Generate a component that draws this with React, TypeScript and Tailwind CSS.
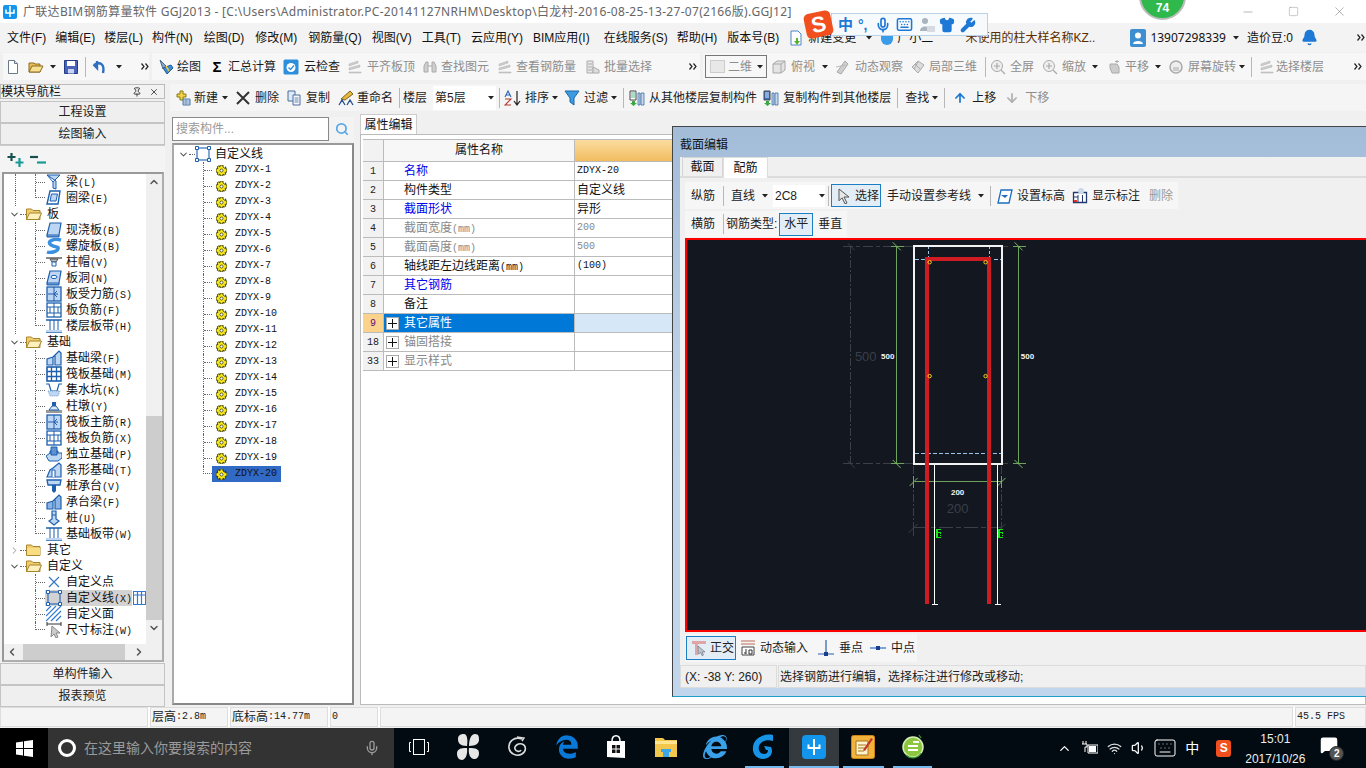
import React from "react";
import { FaEdgeLegacy, FaInternetExplorer } from "react-icons/fa";
import { Mic, ChevronDown, ChevronRight, ChevronUp, ChevronLeft, Search, Wifi, Volume1, Keyboard, X, Minus, Square, Pin, Shirt, Wrench, Bell, ArrowUp, ArrowDown, MessageSquare } from "lucide-react";

const SANS = "font-['Liberation_Sans','Noto_Sans_CJK_SC',sans-serif]";
const MONO = "font-['Liberation_Mono','Noto_Sans_CJK_SC',monospace]";
const NOTO = "font-['Noto_Sans','Noto_Sans_CJK_SC',sans-serif]";

const Mix = ({ text }: { text: string }) => (
  <>
    {text.split(/([\x00-\x7f]+)/).filter(Boolean).map((p, i) =>
      /^[\x00-\x7f]+$/.test(p) ? (
        <span key={i} className={`${MONO} text-[10px] whitespace-pre`}>{p}</span>
      ) : (
        <span key={i} className={`${SANS} text-[12px]`}>{p}</span>
      )
    )}
  </>
);

const Svg = ({ children, w = 16, h = 16, cls = "" }: { children: React.ReactNode; w?: number; h?: number; cls?: string }) => (
  <svg width={w} height={h} viewBox={`0 0 ${w} ${h}`} className={`shrink-0 ${cls}`}>{children}</svg>
);

const Caret = ({ cls = "" }: { cls?: string }) => (
  <svg width="6" height="4" viewBox="0 0 6 4" className={`shrink-0 ${cls}`}><path d="M0 0h6L3 3.5z" fill="#222" /></svg>
);
const Chevrons = ({ cls = "" }: { cls?: string }) => (
  <svg width="8" height="7" viewBox="0 0 8 7" className={`shrink-0 ${cls}`}><path d="M0.5 0.5 3 3.5 0.5 6.5M4.5 0.5 7 3.5 4.5 6.5" fill="none" stroke="#222" strokeWidth="1.2" /></svg>
);
const Sep = ({ cls = "" }: { cls?: string }) => <div className={`w-px h-[20px] bg-[#b8b8b8] shrink-0 ${cls}`} />;

const Item = ({ cls = "", gap = "gap-[3px]", icon, label, gray }: { cls?: string; gap?: string; icon?: React.ReactNode; label: string; gray?: boolean }) => (
  <div className={`flex items-center shrink-0 text-[12px] whitespace-nowrap ${gap} ${cls} ${gray ? "text-[#8e8e8e]" : "text-[#1c1c1c]"}`}>
    {icon}
    <span>{label}</span>
  </div>
);

/* ---- toolbar icons ---- */
const GrayBox = () => <Svg><path d="M2 5 6 2h8v9l-4 3H2z" fill="#e4e4e4" stroke="#a8a8a8" /><path d="M2 5h8v9M10 5l4-3" fill="none" stroke="#a8a8a8" /></Svg>;
const GrayBlob = () => <Svg><path d="M3 13 11 2l3 3-7 10z" fill="#cfcfcf" stroke="#a8a8a8" /><path d="M2 8 12 6" stroke="#bbb" fill="none" /></Svg>;
const GrayCube = () => <Svg><path d="M8 2l6 4-6 8-6-6z" fill="#ddd" stroke="#aaa" /><path d="M5 5l6 6M8 3l-4 7" stroke="#aaa" fill="none" /></Svg>;
const GrayZoom = () => <Svg><circle cx="7" cy="7" r="5.5" fill="#efefef" stroke="#aaa" /><path d="M7 4v6M4 7h6M11 11l4 4" stroke="#aaa" strokeWidth="1.2" fill="none" /></Svg>;
const GrayHand = () => <Svg><path d="M4 9V5h7l2 3v6H6z" fill="#ccc" stroke="#aaa" /><path d="M11 1v3M9 2.5h4" stroke="#aaa" /></Svg>;
const GrayRotate = () => <Svg><circle cx="8" cy="8" r="6" fill="#eee" stroke="#aaa" strokeWidth="1.5" /><path d="M5 8h6v4H5z" fill="#ccc" /></Svg>;
const GrayBino = () => <Svg><path d="M2 13V7l2-4h2v10zM14 13V7l-2-4h-2v10z" fill="#cfcfcf" stroke="#aaa" /><path d="M6 7h4" stroke="#aaa" /></Svg>;
const GrayLayers = () => <Svg><path d="M2 5l9-3v2l-9 3zM2 9l11-3v2L2 11zM2 13h12v1H2z" fill="#ccc" stroke="#b0b0b0" strokeWidth="0.5" /></Svg>;
const GrayBatch = () => <Svg><path d="M2 2h6v12H2z" fill="#e8e8e8" stroke="#aaa" /><path d="M3 5h4M3 8h4M3 11h4M8 8l6 3v3H8z" stroke="#aaa" fill="#ddd" /></Svg>;

const FileIcon = () => <Svg w={14}><path d="M2.5 1.5h6l3 3v10h-9z" fill="#fff" stroke="#6a7a8a" /><path d="M8.5 1.5v3h3" fill="#dde" stroke="#6a7a8a" /></Svg>;
const OpenIcon = () => <Svg><path d="M1 13V4h5l1 1h5v8z" fill="#e9bd55" stroke="#8a6a20" /><path d="M1 13l3-6h11l-3 6z" fill="#f7df90" stroke="#8a6a20" /></Svg>;
const SaveIcon = () => <Svg><path d="M1.5 1.5h13v13h-13z" fill="#4a63b8" stroke="#223a88" /><path d="M4 2h8v5H4z" fill="#fff" /><path d="M5 10h6v4.5H5z" fill="#c8d4f0" /></Svg>;
const UndoIcon = () => <Svg><path d="M5 2v7L1.5 5.5M2 6c6-4 11-1 9 8" fill="none" stroke="#2d6fc0" strokeWidth="2.4" /></Svg>;
const DrawIcon = () => <Svg><path d="M2 1l6 6-3 3z" fill="#8aa9c9" stroke="#46688a" /><path d="M5 9l8-3 2 3-6 6z" fill="#3d8ad6" stroke="#1c5ca0" /><path d="M8 7l3 5" stroke="#f1c232" strokeWidth="1.5" /></Svg>;
const CloudIcon = () => <Svg><rect x="0.5" y="0.5" width="15" height="15" rx="1.5" fill="#2d8fdc" /><circle cx="8" cy="8.5" r="4.5" fill="#fff" /><path d="M5.5 8.5l2 2 3.5-4" stroke="#2d8fdc" strokeWidth="1.4" fill="none" /></Svg>;
const NewIcon = () => <Svg><path d="M5 1h3v3h3v3H8v3H5V7H2V4h3z" fill="#f0d24a" stroke="#8a7a10" /><path d="M8 9h7v6H8z" fill="#d3e2f4" stroke="#4d78a8" /><path d="M8 11h7M8 13h7M11 9v6" stroke="#4d78a8" strokeWidth="0.6" /></Svg>;
const DelIcon = () => <Svg><path d="M2 2l12 12M14 2 2 14" stroke="#333" strokeWidth="2" /></Svg>;
const CopyIcon = () => <Svg><path d="M2 1h7v10H2z" fill="#dfe9f6" stroke="#4b6e9d" /><path d="M7 5h7v10H7z" fill="#f4f7fb" stroke="#4b6e9d" /><path d="M8.5 8h4M8.5 10h4M8.5 12h4" stroke="#4b6e9d" strokeWidth="0.8" /></Svg>;
const RenameIcon = () => <Svg><path d="M3 9l9-8 3 3-8 6z" fill="#e4b63e" stroke="#7f6413" /><path d="M1 15l3-5 3 5M9 15l3-5 3 5" fill="none" stroke="#274f93" strokeWidth="1.3" /></Svg>;
const SortIcon = () => <Svg w={18}><path d="M1 7l3-6 3 6M2 5h4" fill="none" stroke="#2d62b5" strokeWidth="1.1" /><path d="M1 9h6L1 15h6" fill="none" stroke="#b03a2e" strokeWidth="1.1" /><path d="M13 1v13M10 11l3 4 3-4" fill="none" stroke="#222" strokeWidth="1.2" /></Svg>;
const FilterIcon = () => <Svg><path d="M1 1h14L10 8v7L6 12V8z" fill="#3f9ae0" stroke="#1b68a8" /></Svg>;
const CopyFloor = ({ flip }: { flip?: boolean }) => <Svg><path d="M1 1h6v9H1z" fill={flip ? "#3a76c8" : "#fff"} stroke="#444" /><path d="M2 3h4M2 5h4M2 7h4" stroke={flip ? "#fff" : "#2a7"} strokeWidth="0.8" /><path d="M3 11h3v2h2l-3.5 3L1 13h2z" fill="#3aa845" /><path d="M9 3h2v12H9zM12 3h3v12h-3z" fill="#c5d9f1" stroke="#2d5f9e" strokeWidth="0.7" /></Svg>;
const SelectArrow = () => <Svg w={14}><path d="M2 1l10 8H7l3 6-2 .8-3-6-3 3z" fill="#e8e8e8" stroke="#555" /></Svg>;
const ElevIcon = () => <Svg><path d="M4 2h11l-3 13H1z" fill="#fff" stroke="#1d6dc0" strokeWidth="1.3" /><path d="M4 7h7l-3 3z" fill="#1d6dc0" /></Svg>;
const ShowDim = () => <Svg><path d="M1.5 4.5h13v10h-13z" fill="#fff" stroke="#203a70" strokeWidth="1.3" /><path d="M6 7v7M10.5 7v7M2 9h4" stroke="#203a70" /><path d="M2 12h3v2H2z" fill="#d33" /><circle cx="9" cy="3" r="3" fill="#c9d9ea" /></Svg>;
const OrthoIcon = () => <Svg><path d="M1 1h14v3H7v11H4V4H1z" fill="#e0a5a5" /><path d="M7 6l7 6h-3l1.5 3-1.5.6L9.5 12.5 7.5 14z" fill="#bcc6cf" stroke="#667" strokeWidth="0.6" /></Svg>;
const DynIcon = () => <Svg><path d="M1 1h14M1 4h14" stroke="#bb6a55" /><path d="M2 7h12v8H2z" fill="#fff" stroke="#444" /><path d="M4 13h2M6 9v5M9 10h3v4H9z" stroke="#333" fill="none" /></Svg>;
const PerpIcon = () => <Svg><path d="M8 0v14M0 14h16" stroke="#2a5ea8" strokeWidth="1.2" /><rect x="6" y="12" width="4" height="4" fill="#1a3d8f" /></Svg>;
const MidIcon = () => <Svg><path d="M0 8h16" stroke="#7aa4d8" strokeWidth="2" /><rect x="6" y="6" width="4" height="4" fill="#1a3d8f" /></Svg>;

/* ---- tree icons ---- */
const Folder = ({ open }: { open?: boolean }) => (
  <Svg>
    <path d="M0.5 13.5V3h5l1.5 1.5h7v9z" fill="#f2cd6e" stroke="#a7852f" />
    {open ? <path d="M0.5 13.5l3-6.5h12l-3 6.5z" fill="#fff1bd" stroke="#a7852f" /> : <path d="M1 6h13v7H1z" fill="#f9dd83" />}
  </Svg>
);
const B = "#1d5fae";
const L = "#bcd6f3";
const leaf: Record<string, React.ReactNode> = {
  liang: <><path d="M1 1h13l-7 7v6l3 1V7z" fill={L} stroke={B} /><path d="M7 8 1 1" stroke={B} /></>,
  ring: <><path d="M4 1h10l-2 13H1z" fill="#fff" stroke={B} strokeWidth="1.4" /><path d="M5.5 4h6L10 11H4z" fill={L} stroke={B} /></>,
  slab: <><path d="M4 1h11l-2 12H1z" fill={L} stroke={B} strokeWidth="1.2" /><path d="M1 13v2h12v-2" fill="#5b8fd0" stroke={B} /></>,
  spiral: <path d="M15 2C7 0 0 4 5 7s8 1 7 4-8 4-11 3" fill="none" stroke="#3a8fe0" strokeWidth="3.4" />,
  cap: <><path d="M0 3h16v2H0z" fill="#888" /><path d="M4 5h8l-2 3H6z" fill="#bbb" stroke="#555" /><path d="M6 8h4v4H6z" fill="#fff" stroke={B} /></>,
  hole: <><path d="M4 1h11l-2 12H1z" fill={L} stroke={B} strokeWidth="1.2" /><ellipse cx="8" cy="7" rx="3" ry="1.6" fill="#fff" stroke={B} /><path d="M1 13v2h12v-2" fill="#5b8fd0" stroke={B} /></>,
  force: <><rect x="1" y="1" width="14" height="14" fill={L} stroke={B} strokeWidth="1.3" /><path d="M8 1v14M2 8h10M11 5l-3 3 3 3" stroke={B} fill="none" /></>,
  neg: <><rect x="1" y="1" width="14" height="14" fill="#fff" stroke={B} strokeWidth="1.3" /><path d="M8 1v14M1 5h14M1 11h14M4 5v6M12 5v6" stroke={B} /></>,
  strip: <><path d="M0 2h16M0 14h16" stroke={B} strokeWidth="1.5" /><path d="M4 2v12M8 2v12M12 2v12" stroke={B} /><path d="M0 12h16v2H0z" fill={L} /></>,
  fbeam: <><path d="M1 15V9l6-2v8zM7 7l6-6 2 2v12H9V5" fill={L} stroke={B} strokeWidth="1.2" /></>,
  raft: <><rect x="1" y="1" width="14" height="14" fill="#fff" stroke={B} strokeWidth="1.6" /><path d="M1 5.5h14M1 10.5h14M5.5 1v14M10.5 1v14" stroke={B} strokeWidth="1.3" /></>,
  pit: <><path d="M0 2h3l2 7h6l2-7h3" fill="none" stroke={B} strokeWidth="1.2" /><path d="M2 9h12l-2 5H4z" fill={L} stroke="#7aa0c8" strokeDasharray="1 1" /></>,
  pier: <><path d="M0 12h16v3H0z" fill="#999" /><path d="M3 12l3-4h4l3 4z" fill="#dbe6f3" stroke={B} /><path d="M6 4h4v4H6z" fill={B} /></>,
  iso: <><path d="M4 5h8v6H4z" fill="#3f76bb" stroke={B} /><path d="M0 10l4-3h12v5l-4 3H3z" fill={L} stroke={B} /><path d="M5 1h6v8H5z" fill="#5d92d5" stroke={B} /></>,
  strf: <><path d="M1 15l3-7 3-2 6-5 2 2v12z" fill={L} stroke={B} strokeWidth="1.2" /><path d="M6 15V8h3v7" fill="#fff" stroke={B} /></>,
  cap2: <><path d="M1 2h14l-1 5H2z" fill={L} stroke={B} strokeWidth="1.3" /><path d="M6 7h4v6l-2 2-2-2z" fill={B} /></>,
  cbeam: <><path d="M1 15V9l6-2v8zM7 7l6-6 2 2v12H9V5" fill="#8cb5e6" stroke={B} strokeWidth="1.2" /></>,
  pile: <><path d="M6 1h4v8l3 2-5 4-5-4 3-2z" fill={L} stroke={B} strokeWidth="1.2" /><path d="M6 5h4" stroke={B} /></>,
  pt: <path d="M3 3l10 10M13 3 3 13" stroke="#3778c4" strokeWidth="1.2" fill="none" />,
  line: <><rect x="2" y="2" width="12" height="12" fill="none" stroke={B} strokeWidth="1.1" /><path d="M0.5 0.5h3v3h-3zM12.5 0.5h3v3h-3zM0.5 12.5h3v3h-3zM12.5 12.5h3v3h-3z" fill="#fff" stroke={B} /></>,
  face: <path d="M0 5 5 0M0 10 10 0M0 15 15 0M5 15 15 5M10 15l5-5" stroke="#2f7ad0" strokeWidth="1.2" />,
  dim: <><path d="M1 2h14M1 0v4M15 0v4" stroke="#333" /><path d="M6 4l8 7h-4l2 4-2 1-2-4-3 3z" fill="#ccc" stroke="#888" /></>,
};
const Leaf = ({ n }: { n: string }) => <Svg>{leaf[n]}</Svg>;

const Branch = ({ last, w = "w-[10px]" }: { last?: boolean; w?: string }) => (
  <span className={`${w} ${last ? "h-1/2 self-start border-b" : "h-full"} border-l border-dotted border-[#666] shrink-0 flex items-center`}>
    {!last && <span className="w-full border-b border-dotted border-[#666]" />}
  </span>
);

type Row = { t: string; f?: "open" | "closed"; i?: string; last?: boolean; sel?: boolean; end?: boolean };
const navRows: Row[] = [
  { t: "梁(L)", i: "liang" },
  { t: "圈梁(E)", i: "ring", last: true },
  { t: "板", f: "open" },
  { t: "现浇板(B)", i: "slab" },
  { t: "螺旋板(B)", i: "spiral" },
  { t: "柱帽(V)", i: "cap" },
  { t: "板洞(N)", i: "hole" },
  { t: "板受力筋(S)", i: "force" },
  { t: "板负筋(F)", i: "neg" },
  { t: "楼层板带(H)", i: "strip", last: true },
  { t: "基础", f: "open" },
  { t: "基础梁(F)", i: "fbeam" },
  { t: "筏板基础(M)", i: "raft" },
  { t: "集水坑(K)", i: "pit" },
  { t: "柱墩(Y)", i: "pier" },
  { t: "筏板主筋(R)", i: "force" },
  { t: "筏板负筋(X)", i: "neg" },
  { t: "独立基础(P)", i: "iso" },
  { t: "条形基础(T)", i: "strf" },
  { t: "桩承台(V)", i: "cap2" },
  { t: "承台梁(F)", i: "cbeam" },
  { t: "桩(U)", i: "pile" },
  { t: "基础板带(W)", i: "strip", last: true },
  { t: "其它", f: "closed" },
  { t: "自定义", f: "open", end: true },
  { t: "自定义点", i: "pt", end: true },
  { t: "自定义线(X)", i: "line", sel: true, end: true },
  { t: "自定义面", i: "face", end: true },
  { t: "尺寸标注(W)", i: "dim", last: true, end: true },
];

const NavTree = () => (
  <div className="flex-1 flex flex-col overflow-hidden min-w-0">
    {navRows.map((r) =>
      r.f ? (
        <div key={r.t} className="h-[16px] flex items-center shrink-0 text-[#111]">
          {r.f === "open" ? <ChevronDown size={11} strokeWidth={2.2} color="#555" className="ml-[5px] shrink-0" /> : <ChevronRight size={11} strokeWidth={2.2} color="#aaa" className="ml-[5px] shrink-0" />}
          <span className="w-[6px] border-b border-dotted border-[#666] shrink-0" />
          <Folder open={r.f === "open"} />
          <span className="ml-[5px] leading-none"><Mix text={r.t} /></span>
        </div>
      ) : (
        <div key={r.t} className="h-[16px] flex items-center shrink-0 text-[#111]">
          <span className={`ml-[11px] w-[20px] h-full shrink-0 ${r.end ? "" : "border-l border-dotted border-[#666]"}`} />
          <Branch last={r.last} />
          <div className={`flex items-center h-full pl-[1px] ${r.sel ? "bg-[#d3d3d3] w-[90px]" : ""}`}>
            <Leaf n={r.i as string} />
            <span className="ml-[4px] leading-none whitespace-nowrap"><Mix text={r.t} /></span>
          </div>
          {r.sel && (
            <svg width="13" height="14" viewBox="0 0 13 14" className="shrink-0 ml-[1px]"><rect x="0.5" y="0.5" width="12" height="13" fill="#fff" stroke="#2f7ad0" /><path d="M4.5 1v12M8.5 1v12M1 4h11" stroke="#2f7ad0" strokeWidth="1.2" /></svg>
          )}
        </div>
      )
    )}
  </div>
);

const Btn = ({ t, cls = "" }: { t: string; cls?: string }) => (
  <div className={`h-[22px] shrink-0 border border-[#c4c4c4] bg-[#efefef] flex items-center justify-center text-[12px] text-[#222] ${cls}`}>{t}</div>
);

const Nav = () => (
  <div className="w-[165px] shrink-0 flex flex-col pt-[2px]">
    <div className="h-[15px] shrink-0 border border-[#bbb] bg-[#f2f2f2] flex items-center text-[12px] text-[#111]">
      <span className="leading-none">模块导航栏</span>
      <Pin size={10} className="ml-[71px]" color="#222" />
      <X size={10} className="ml-[7px]" color="#333" />
    </div>
    <Btn t="工程设置" cls="mt-[2px]" />
    <Btn t="绘图输入" />
    <div className="h-[27px] shrink-0 bg-[#f4f4f4] border-t border-[#ccc] flex items-center pl-[7px]">
      <svg width="40" height="18" viewBox="0 0 40 18">
        <path d="M4.500 3v8M0.500 7h8" stroke="#17504f" strokeWidth="2.200" />
        <path d="M12.500 8v9M8.500 12.500h8" stroke="#159a96" strokeWidth="2.200" />
        <path d="M23 7h8" stroke="#17504f" strokeWidth="2.200" />
        <path d="M30 12.500h9" stroke="#159a96" strokeWidth="2.200" />
      </svg>
    </div>
    <div className="flex-1 min-h-0 ml-[2px] mr-[1px] border-2 border-[#aeaeae] border-t-[#999] border-l-[#999] bg-white flex flex-col">
      <div className="flex-1 min-h-0 flex">
        <NavTree />
        <div className="w-[16px] shrink-0 bg-[#f0f0f0] flex flex-col items-center">
          <ChevronUp size={12} strokeWidth={3} color="#555" className="mt-[2px] shrink-0" />
          <div className="mt-[228px] w-full h-[204px] bg-[#cdcdcd] shrink-0" />
          <ChevronDown size={12} strokeWidth={3} color="#555" className="mt-[2px] shrink-0" />
        </div>
      </div>
      <div className="h-[16px] shrink-0 bg-[#f0f0f0] flex items-center">
        <ChevronLeft size={12} strokeWidth={3} color="#555" className="ml-[2px] shrink-0" />
        <div className="ml-[5px] w-[102px] h-full bg-[#cdcdcd]" />
        <ChevronRight size={12} strokeWidth={3} color="#555" className="ml-[8px] shrink-0" />
      </div>
    </div>
    <Btn t="单构件输入" cls="mt-[1px]" />
    <Btn t="报表预览" />
  </div>
);

const SteelIcon = () => (
  <svg width="11" height="11" viewBox="0 0 11 11" className="shrink-0">
    <path d="M4 0h3v2l1.5 1L10 1.8 9.2 3.5 11 4v3l-2 .5.8 1.7-1.6.8L7 9v2H4V9L2.5 10 1.200 9.200 2 7.500 0 7V4l2-.5L1.200 1.800 2.500 1 4 2z" fill="#f5ea19" stroke="#222" strokeWidth="0.8" />
    <circle cx="5.500" cy="5.500" r="1.500" fill="#fff" stroke="#222" strokeWidth="0.7" />
  </svg>
);

const CompTree = () => (
  <div className="w-[182px] shrink-0 flex flex-col pt-[3px] ml-[2px]">
    <div className="h-[24px] shrink-0 flex">
      <div className="w-[157px] border border-[#8a8a8a] bg-white flex items-center pl-[3px] text-[12px] text-[#9a9a9a]">搜索构件...</div>
      <div className="w-[24px] ml-[1px] bg-[#f3f3f3] flex items-center justify-center"><Search size={14} strokeWidth={3} color="#5aa9e6" /></div>
    </div>
    <div className="mt-[2px] flex-1 min-h-0 border-2 border-[#888] border-t-[#999] border-l-[#aaa] bg-white flex flex-col">
      <div className="h-[16px] mt-[1px] flex items-center shrink-0">
        <ChevronDown size={11} strokeWidth={2.2} color="#555" className="ml-[4px] shrink-0" />
        <span className="w-[6px] border-b border-dotted border-[#666] shrink-0" />
        <Svg>{leaf.line}</Svg>
        <span className="ml-[4px] text-[12px] text-[#111]">自定义线</span>
      </div>
      {Array.from({ length: 20 }, (_, i) => i + 1).map((n) => (
        <div key={n} className="h-[16px] flex items-center shrink-0">
          <span className="w-[29px] shrink-0" />
          <Branch last={n === 20} w="w-[9px]" />
          <div className={`flex items-center h-full ${n === 20 ? "bg-[#316ac5] w-[69px] pl-[4px]" : "pl-[4px]"}`}>
            <SteelIcon />
            <span className={`ml-[8px] ${MONO} text-[10px] text-[#111] leading-none`}>ZDYX-{n}</span>
          </div>
        </div>
      ))}
    </div>
  </div>
);

const rows: { n: string; a: string; v?: string; color?: string; vgray?: boolean; plus?: boolean; sel?: boolean }[] = [
  { n: "1", a: "名称", v: "ZDYX-20", color: "text-[#0000ee]" },
  { n: "2", a: "构件类型", v: "自定义线" },
  { n: "3", a: "截面形状", v: "异形", color: "text-[#0000ee]" },
  { n: "4", a: "截面宽度(mm)", v: "200", color: "text-[#888]", vgray: true },
  { n: "5", a: "截面高度(mm)", v: "500", color: "text-[#888]", vgray: true },
  { n: "6", a: "轴线距左边线距离(mm)", v: "(100)" },
  { n: "7", a: "其它钢筋", color: "text-[#0000ee]" },
  { n: "8", a: "备注" },
  { n: "9", a: "其它属性", plus: true, sel: true },
  { n: "18", a: "锚固搭接", plus: true, color: "text-[#888]" },
  { n: "33", a: "显示样式", plus: true, color: "text-[#888]" },
];

const PropPanel = () => (
  <div className="flex-1 min-w-0 ml-[6px] flex flex-col">
    <div className="h-[20px] shrink-0 flex">
      <div className="w-[57px] border border-b-0 border-[#ccc] bg-white flex items-center justify-center text-[12px] text-[#111]">属性编辑</div>
    </div>
    <div className="flex-1 min-h-0 bg-white border border-[#bbb] pt-[4px] pl-[2px]">
      <div className="h-[23px] flex border-y border-[#bbb]">
        <div className="w-[21px] bg-[#f2f2f2] border-r border-[#bbb]" />
        <div className="w-[191px] bg-[#f7f7f7] border-r border-[#bbb] flex items-center justify-center text-[12px] text-[#111] pb-[2px]">属性名称</div>
        <div className="flex-1 bg-gradient-to-b from-[#fbdc9f] to-[#f1bd5e]" />
      </div>
      {rows.map((r) => (
        <div key={r.n} className="h-[19px] flex border-b border-[#bbb] text-[12px]">
          <div className={`w-[21px] shrink-0 border-r border-[#bbb] flex items-center justify-center ${MONO} text-[10px] ${r.sel ? "bg-[#fbd28b] text-[#601080]" : "bg-[#f2f2f2] text-[#222]"}`}>{r.n}</div>
          <div className={`w-[191px] shrink-0 border-r border-[#bbb] flex items-center ${r.sel ? "bg-[#0078d7] text-white" : r.color || "text-[#111]"}`}>
            {r.plus ? (
              <span className="ml-[2px] w-[13px] h-[13px] border border-[#aaa] bg-white flex items-center justify-center shrink-0">
                <svg width="9" height="9" viewBox="0 0 9 9"><path d="M4.500 0v9M0 4.500h9" stroke="#111" /></svg>
              </span>
            ) : (
              <span className="w-[15px] shrink-0" />
            )}
            <span className="ml-[5px] leading-none whitespace-nowrap"><Mix text={r.a} /></span>
          </div>
          <div className={`flex-1 flex items-center pl-[2px] leading-none ${r.sel ? "bg-[#d6e8f8]" : ""} ${r.vgray ? "text-[#888]" : "text-[#111]"}`}>
            {r.v && <Mix text={r.v} />}
          </div>
        </div>
      ))}
    </div>
  </div>
);

/* ---- CAD drawing ---- */
const Tick = ({ x, y, flip }: { x: number; y: number; flip?: boolean }) => (
  <path d={flip ? `M${x - 4} ${y + 4}L${x + 4} ${y - 4}` : `M${x - 4} ${y - 4}L${x + 4} ${y + 4}`} stroke="#7db968" fill="none" />
);
const Canvas = () => (
  <svg viewBox="687 241 680 390" className="block w-full h-full" shapeRendering="crispEdges">
    <rect x="687" y="241" width="680" height="390" fill="#13171f" />
    <g stroke="#3a3f48" fill="none">
      <path d="M851 247V465" strokeDasharray="8 2 2 2" />
      <path d="M843 247H913M843 465H913M1003 247H1008M1003 465H1008" strokeDasharray="10 3 4 3" />
      <path d="M914 467V529M1002 467V529M914 529V537" strokeDasharray="8 2 2 2" />
      <path d="M914 529H1002" strokeDasharray="14 3 5 3" />
      <path d="M848 244 855 251M848 462 855 469M909 534 918 525M998 533 1006 525" shapeRendering="auto" />
    </g>
    <g stroke="#6fa35c" fill="none">
      <path d="M897 247V465M1019 247V465" />
      <path d="M891 247H904M891 465H904M1013 247H1026M1013 465H1026" />
      <path d="M915 483H1002" />
      <path d="M914 477V489M1002 477V489" />
    </g>
    <g shapeRendering="auto">
      <Tick x={897} y={247} /><Tick x={897} y={465} /><Tick x={1019} y={247} /><Tick x={1019} y={465} />
      <Tick x={914} y={483} flip /><Tick x={1002} y={483} flip />
    </g>
    <path d="M929 247V258M990 247V258" stroke="#9cc4ec" strokeDasharray="3 2" />
    <path d="M915 260H925M994 260H1002M915 455H1001" stroke="#9cc4ec" strokeDasharray="4 2" />
    <rect x="914" y="247" width="88" height="218" fill="none" stroke="#f2f2f2" strokeWidth="2" />
    <path d="M934.500 466V605M997.500 466V605" stroke="#fff" />
    <path d="M932 605.500H938M995 605.500H1001" stroke="#fff" />
    <path d="M927 605V260H989V605" fill="none" stroke="#cf1c23" strokeWidth="4" />
    <g fill="none" stroke="#f3d21c" strokeWidth="1" shapeRendering="auto">
      <circle cx="930" cy="263" r="1.700" /><circle cx="986" cy="263" r="1.700" /><circle cx="930" cy="377" r="1.700" /><circle cx="986" cy="377" r="1.700" />
    </g>
    <g fill="#19e619">
      <path d="M936 530h5v1h-3v2h3v2h-1v-1h-2v2h3v1h-1v-1h-2v2h3v1h-5z" /><path d="M998 530h5v1h-3v2h3v2h-1v-1h-2v2h3v1h-1v-1h-2v2h3v1h-5z" />
    </g>
    <g textAnchor="middle" className="font-['Liberation_Sans',sans-serif]" shapeRendering="auto">
      <text x="866" y="362" fontSize="13" fill="#3a3f48">500</text>
      <text x="888" y="360" fontSize="8" fontWeight="700" fill="#f4f4f4">500</text>
      <text x="1028" y="360" fontSize="8" fontWeight="700" fill="#f4f4f4">500</text>
      <text x="958" y="496" fontSize="8" fontWeight="700" fill="#f4f4f4">200</text>
      <text x="958" y="514" fontSize="13" fill="#3a3f48">200</text>
    </g>
  </svg>
);

const Dialog = () => (
  <div className="absolute left-[672px] top-[126px] w-[694px] h-[571px] border-t border-l border-b border-t-[#444] border-l-[#444] border-b-[#1ba1c9] bg-gradient-to-b from-[#a3bcd8] via-[#bed4ea] to-[#c0d6ec] flex flex-col overflow-hidden pl-[7px]">
    <div className="h-[30px] shrink-0 flex items-center pt-[6px] text-[12px] text-[#111]">截面编辑</div>
    <div className="h-[531px] shrink-0 bg-[#f0f0f0] flex flex-col">
      <div className="h-[21px] shrink-0 flex items-end pl-[2px] border-b-2 border-[#dcdcdc]">
        <div className="w-[41px] h-[19px] border border-b-0 border-[#d5d5d5] bg-[#f0f0f0] flex items-center justify-center text-[12px] text-[#111]">截面</div>
        <div className="w-[45px] h-[21px] -mb-[2px] bg-white border-x border-t border-[#ddd] flex items-center justify-center text-[12px] text-[#111]">配筋</div>
      </div>
      <div className="mt-[4px] ml-[5px] w-[493px] h-[27px] shrink-0 bg-[#f6f6f6] flex items-center text-[12px] text-[#222]">
        <span className="ml-[6px]">纵筋</span>
        <Sep cls="ml-[8px]" />
        <span className="ml-[7px]">直线</span>
        <Caret cls="ml-[7px]" />
        <div className="ml-[5px] w-[52px] h-[22px] bg-white flex items-center pl-[2px] shrink-0"><span className="text-[12px]">2C8</span><Caret cls="ml-[22px]" /></div>
        <Sep cls="ml-[3px]" />
        <div className="ml-[2px] w-[50px] h-[23px] border border-[#1a7fc4] bg-[#e3edf6] flex items-center pl-[5px] gap-[4px] shrink-0"><SelectArrow /><span>选择</span></div>
        <span className="ml-[6px] whitespace-nowrap">手动设置参考线</span>
        <Caret cls="ml-[7px]" />
        <Sep cls="ml-[6px]" />
        <Item cls="ml-[6px]" gap="gap-[4px]" icon={<ElevIcon />} label="设置标高" />
        <Item cls="ml-[7px]" gap="gap-[4px]" icon={<ShowDim />} label="显示标注" />
        <span className="ml-[9px] text-[#999] shrink-0">删除</span>
      </div>
      <div className="mt-[2px] ml-[5px] w-[162px] h-[26px] shrink-0 bg-[#f6f6f6] flex items-center text-[12px] text-[#222] whitespace-nowrap">
        <span className="ml-[6px]">横筋</span>
        <Sep cls="ml-[8px]" />
        <span className="ml-[2px]">钢筋类型:</span>
        <div className="ml-[2px] w-[34px] h-[23px] border border-[#1a7fc4] bg-[#e3edf6] flex items-center justify-center shrink-0">水平</div>
        <span className="ml-[5px]">垂直</span>
      </div>
      <div className="ml-[5px] mt-[1px] h-[394px] shrink-0 border-2 border-[#f00] border-r-0">
        <Canvas />
      </div>
      <div className="mt-[2px] ml-[5px] w-[232px] h-[28px] shrink-0 bg-[#f6f6f6] flex items-center text-[12px] text-[#222]">
        <div className="ml-[1px] w-[50px] h-[24px] border border-[#1a7fc4] bg-[#e3edf6] flex items-center pl-[4px] gap-[3px] shrink-0"><OrthoIcon /><span>正交</span></div>
        <Item cls="ml-[4px]" gap="gap-[4px]" icon={<DynIcon />} label="动态输入" />
        <Item cls="ml-[10px]" gap="gap-[5px]" icon={<PerpIcon />} label="垂点" />
        <Item cls="ml-[7px]" gap="gap-[5px]" icon={<MidIcon />} label="中点" />
      </div>
      <div className="mt-[3px] h-[23px] shrink-0 flex text-[12px] text-[#222]">
        <div className="w-[97px] border border-[#dcdcdc] flex items-center pl-[4px] shrink-0">(X: -38 Y: 260)</div>
        <div className="ml-[1px] flex-1 border border-[#dcdcdc] flex items-center pl-[1px]">选择钢筋进行编辑，选择标注进行修改或移动;</div>
      </div>
    </div>
  </div>
);

/* ---- taskbar ---- */
const Cell = ({ children, bar, active, barCls = "mx-[4px]" }: { children: React.ReactNode; bar?: boolean; active?: boolean; barCls?: string }) => (
  <div className={`w-[49.4px] h-full shrink-0 flex flex-col ${active ? "bg-[#343a3e]" : ""}`}>
    <div className="flex-1 flex items-center justify-center">{children}</div>
    <div className={`h-[2px] ${bar ? `bg-[#76b9ed] ${active ? "" : barCls}` : ""}`} />
  </div>
);

const Taskbar = () => (
  <div className="h-[40px] shrink-0 bg-[#020b11] flex items-center text-white">
    <div className="w-[48px] h-full bg-black flex items-center justify-center">
      <svg width="17" height="17" viewBox="0 0 17 17"><path d="M0 2.500 7 1.500V8H0zM8 1.300 17 0V8H8zM0 9h7v6.500L0 14.500zM8 9h9v8l-9-1.300z" fill="#fff" /></svg>
    </div>
    <div className="w-[346px] h-full bg-[#333] flex items-center">
      <span className="ml-[10px] w-[18px] h-[18px] rounded-full border-[3px] border-white shrink-0" />
      <span className="ml-[8px] text-[14px] text-[#9a9a9a] leading-none">在这里输入你要搜索的内容</span>
      <Mic size={16} color="#9a9a9a" className="ml-[112px]" />
    </div>
    <div className="flex h-full">
      <Cell><svg width="20" height="16" viewBox="0 0 20 16"><rect x="4.500" y="0.500" width="11" height="15" fill="none" stroke="#fff" /><path d="M2 3.500H0.500v9H2M18 3.500h1.500v9H18" fill="none" stroke="#fff" /></svg></Cell>
      <Cell><svg width="22" height="26" viewBox="0 0 22 26"><path d="M10 12C3 12 1 9 1 5s3-5 6-5 4 5 3 12zM12 12c0-7 2-12 6-12s4 3 4 6-3 6-10 6zM10 14c-7 0-10 1-10 6 0 3 2 6 5 6s6-5 5-12zM12 14c7 0 10 1 10 5s-2 6-5 6-6-4-5-11z" fill="#e6e6e6" /></svg></Cell>
      <Cell><svg width="20" height="22" viewBox="0 0 20 22"><path d="M15 3C7 0 1 6 2 12s8 9 13 6 4-9 0-10-8 2-7 5 5 3 6 1" fill="none" stroke="#ddd" strokeWidth="1.600" /><path d="M10 1l7 1-2 3" fill="none" stroke="#ddd" strokeWidth="1.400" /></svg></Cell>
      <Cell><FaEdgeLegacy size={24} color="#0a78d7" /></Cell>
      <Cell><svg width="20" height="24" viewBox="0 0 20 24"><path d="M1 6h18v17l-18-1z" fill="#fff" /><path d="M6 6c0-7 8-7 8 0" fill="none" stroke="#fff" strokeWidth="1.500" /><path d="M6 10h3.500v3.500H6zM10.500 10H14v3.500h-3.500zM6 14.500h3.500V18H6zM10.500 14.500H14V18h-3.500z" fill="#111" /></svg></Cell>
      <Cell><svg width="22" height="22" viewBox="0 0 22 22"><path d="M0 2h8l2 2h12v17H0z" fill="#f3c64c" /><path d="M0 5h22v3H0z" fill="#ffe590" /><path d="M6 13h10v3h-2v5H8v-5H6z" fill="#3aa7e8" /></svg></Cell>
      <Cell><FaInternetExplorer size={24} color="#3aa0e8" /></Cell>
      <Cell bar barCls="mx-[5px]"><svg width="24" height="26" viewBox="0 0 24 26"><path d="M21 1c-9-2-19 3-20 12-1 7 4 12 10 12 7 0 11-6 8-12l-7-1 2 4 2 0c0 3-2 4-4 4-4 0-6-4-5-8 2-5 8-7 14-5z" fill="#1694e8" /></svg></Cell>
      <Cell bar active><div className="w-[24px] h-[24px] rounded-[4px] bg-[#1295ea] flex items-center justify-center"><svg width="16" height="18" viewBox="0 0 16 18"><path d="M8 1v16M2.500 6.500v3.500h11V6.500" fill="none" stroke="#fff" strokeWidth="2" /></svg></div></Cell>
      <Cell bar><svg width="24" height="24" viewBox="0 0 24 24"><rect x="0.500" y="0.500" width="23" height="23" rx="2" fill="#f2b33c" stroke="#c98316" /><path d="M5 6h12v14H5z" fill="#fdf3cc" stroke="#a8741a" /><path d="M7 10h8M7 13h8M7 16h6" stroke="#a8741a" /><path d="M12 15 20 3l2 1-8 12z" fill="#c0392b" /></svg></Cell>
      <Cell bar barCls="mx-[5px]"><svg width="22" height="26" viewBox="0 0 22 26"><circle cx="11" cy="13" r="10" fill="#8cc63f" stroke="#d8eeb8" strokeWidth="1.500" /><path d="M6 11h10v2H6zM6 15h10v2H6z" fill="#fff" /><path d="M11 8h6" stroke="#fff" strokeWidth="2" /><path d="M4 21c4 4 12 4 15-2M17 1l2 3" fill="none" stroke="#3a9a2a" strokeWidth="1.300" /></svg></Cell>
    </div>
    <div className="flex-1 flex items-center h-full min-w-0">
      <ChevronUp size={15} color="#fff" className="ml-[120px] shrink-0" />
      <svg width="16" height="14" viewBox="0 0 16 14" className="ml-[10px] shrink-0"><path d="M1 0v3M4 0v3M0 3h5v3H3v5M6 4h10v8H6z" fill="none" stroke="#fff" /><path d="M7 5h7v6H7z" fill="#fff" /></svg>
      <Wifi size={15} color="#ddd" className="ml-[9px] shrink-0" />
      <Volume1 size={16} color="#eee" className="ml-[9px] shrink-0" />
      <Keyboard size={24} strokeWidth={1} color="#fff" className="ml-[6px] shrink-0" />
      <span className="ml-[8px] text-[14px] leading-none shrink-0">中</span>
      <span className="ml-[17px] w-[15px] h-[17px] rounded-[3px] bg-[#f1501e] flex items-center justify-center text-[12px] font-bold leading-none shrink-0">S</span>
      <div className="ml-[8px] w-[72px] text-[12px] leading-[20px] text-center shrink-0 text-[#eee] pt-[1px]"><div>15:01</div><div>2017/10/26</div></div>
      <div className="ml-[9px] relative shrink-0 w-[20px] h-[24px]">
        <MessageSquare size={18} color="#fff" fill="#fff" />
        <span className="absolute -right-[4px] bottom-[-1px] w-[15px] h-[15px] rounded-full bg-[#555] border border-[#222] flex items-center justify-center text-[10px] font-bold leading-none">2</span>
      </div>
    </div>
  </div>
);

export default function App() {
  const menus: [string, string][] = [
    ["文件(F)", "ml-[7px]"], ["编辑(E)", "ml-[9px]"], ["楼层(L)", "ml-[9px]"], ["构件(N)", "ml-[9px]"], ["绘图(D)", "ml-[11px]"], ["修改(M)", "ml-[11px]"], ["钢筋量(Q)", "ml-[11px]"], ["视图(V)", "ml-[10px]"], ["工具(T)", "ml-[10px]"], ["云应用(Y)", "ml-[10px]"], ["BIM应用(I)", "ml-[10px]"], ["在线服务(S)", "ml-[14px]"], ["帮助(H)", "ml-[9px]"], ["版本号(B)", "ml-[10px]"],
  ];
  return (
    <div className={`relative w-[1366px] h-[768px] overflow-hidden bg-[#f0f0f0] flex flex-col ${SANS} text-[12px]`}>
      {/* title */}
      <div className="h-[23px] shrink-0 bg-white flex items-center">
        <div className="ml-[3px] w-[14px] h-[14px] rounded-[2px] bg-[#1295ea] flex items-center justify-center shrink-0"><svg width="10" height="11" viewBox="0 0 10 11"><path d="M5 0v11M1 3.500V7h8V3.500" fill="none" stroke="#fff" strokeWidth="1.500" /></svg></div>
        <span className={`ml-[6px] text-[12px] text-[#666] whitespace-nowrap tracking-[0.3px] ${NOTO}`}>广联达BIM钢筋算量软件 GGJ2013 - [C:\Users\Administrator.PC-20141127NRHM\Desktop\白龙村-2016-08-25-13-27-07(2166版).GGJ12]</span>
        <div className="ml-auto flex items-center gap-[33px] pr-[19px]">
          <Minus size={14} strokeWidth={1} color="#888" />
          <Square size={11} strokeWidth={1} color="#888" />
          <X size={15} strokeWidth={1} color="#888" />
        </div>
      </div>
      {/* menu */}
      <div className="h-[29px] shrink-0 bg-[#f3f3f3] flex items-center text-[#111]">
        {menus.map(([m, c]) => <span key={m} className={`${c} whitespace-nowrap text-[12px]`}>{m}</span>)}
        <div className="ml-[9px] flex items-center shrink-0">
          <Svg><path d="M3 1h7l3 3v11H3z" fill="#fff" stroke="#4a86c8" /><path d="M8 8v3H6l3 4 3-4h-2V8z" fill="#5cb030" /></Svg>
          <span className="ml-[4px]">新建变更</span>
          <Caret cls="ml-[10px]" />
          <svg width="16" height="16" viewBox="0 0 16 16" className="ml-[7px]"><path d="M2 3h12v6a6 6 0 0 1-12 0z" fill="#3a9be8" /></svg>
          <span className="ml-[2px]">广小二</span>
        </div>
        <span className="ml-[32px] whitespace-nowrap text-[#5a2d00]">未使用的柱大样名称KZ..</span>
        <div className="ml-[35px] flex items-center shrink-0">
          <div className="w-[16px] h-[18px] rounded-[2px] bg-[#3d8fd1] flex items-center justify-center"><svg width="10" height="12" viewBox="0 0 10 12"><circle cx="5" cy="3.500" r="3" fill="#fff" /><path d="M0 12c0-4 10-4 10 0z" fill="#fff" /></svg></div>
          <span className={`ml-[4px] ${NOTO}`}>13907298339</span>
          <Caret cls="ml-[7px]" />
          <span className="ml-[8px]">造价豆:0</span>
          <Bell size={17} color="#1e78d6" fill="#1e78d6" className="ml-[8px]" />
          <Chevrons cls="ml-[39px]" />
        </div>
      </div>
      <div className="h-px shrink-0" />
      {/* toolbar 1 */}
      <div className="h-[27px] shrink-0 flex">
        <div className="ml-[3px] w-[146px] h-full bg-[#f7f7f7] flex items-center shrink-0">
          <span className="ml-[3px] w-[14px] flex"><FileIcon /></span>
          <span className="ml-[8px]"><OpenIcon /></span>
          <Caret cls="ml-[6px]" />
          <span className="ml-[7px]"><SaveIcon /></span>
          <Sep cls="ml-[6px]" />
          <span className="ml-[6px]"><UndoIcon /></span>
          <Caret cls="ml-[8px]" />
          <Chevrons cls="ml-[19px]" />
        </div>
        <div className="ml-[3px] w-[548px] h-full bg-[#f7f7f7] flex items-center shrink-0">
          <Item cls="ml-[6px]" icon={<DrawIcon />} label="绘图" />
          <span className="ml-[9px] w-[14px] text-center font-bold text-[15px] leading-none">Σ</span>
          <span className="ml-[4px] text-[#1c1c1c]">汇总计算</span>
          <Item cls="ml-[7px]" gap="gap-[5px]" icon={<CloudIcon />} label="云检查" />
          <Item cls="ml-[7px]" gap="gap-[4px]" gray icon={<GrayLayers />} label="平齐板顶" />
          <Item cls="ml-[7px]" gray icon={<GrayBino />} label="查找图元" />
          <Item cls="ml-[8px]" gray icon={<GrayLayers />} label="查看钢筋量" />
          <Item cls="ml-[9px]" gray icon={<GrayBatch />} label="批量选择" />
          <Chevrons cls="ml-[37px]" />
        </div>
        <div className="ml-[3px] flex-1 h-full bg-[#f7f7f7] flex items-center min-w-0">
          <div className="ml-[2px] w-[62px] h-[23px] border border-[#777] flex items-center pl-[4px] shrink-0 text-[#8e8e8e]">
            <span className="w-[15px] h-[13px] bg-[#e8e8e8] border border-[#ccc]" />
            <span className="ml-[3px]">二维</span>
            <Caret cls="ml-[5px]" />
          </div>
          <Item cls="ml-[4px]" gap="gap-[4px]" gray icon={<GrayBox />} label="俯视" />
          <Caret cls="ml-[7px]" />
          <Item cls="ml-[6px]" gap="gap-[5px]" gray icon={<GrayBlob />} label="动态观察" />
          <Item cls="ml-[7px]" gray icon={<GrayCube />} label="局部三维" />
          <Sep cls="ml-[8px]" />
          <Item cls="ml-[4px]" gap="gap-[4px]" gray icon={<GrayZoom />} label="全屏" />
          <Item cls="ml-[8px]" gap="gap-[4px]" gray icon={<GrayZoom />} label="缩放" />
          <Caret cls="ml-[6px]" />
          <Item cls="ml-[8px]" gray icon={<GrayHand />} label="平移" />
          <Caret cls="ml-[6px]" />
          <Item cls="ml-[7px]" gap="gap-[4px]" gray icon={<GrayRotate />} label="屏幕旋转" />
          <Caret cls="ml-[3px]" />
          <Sep cls="ml-[6px]" />
          <Item cls="ml-[7px]" gap="gap-[1px]" gray icon={<GrayLayers />} label="选择楼层" />
          <Chevrons cls="ml-[30px]" />
        </div>
      </div>
      {/* main */}
      <div className="flex-1 min-h-0 flex pt-[2px]">
        <Nav />
        <div className="flex-1 min-w-0 ml-[5px] flex flex-col">
          <div className="h-[27px] mt-[2px] shrink-0 bg-[#f5f5f5] flex items-center text-[#1c1c1c]">
            <Item cls="ml-[5px]" gap="gap-[3px]" icon={<NewIcon />} label="新建" />
            <Caret cls="ml-[4px]" />
            <Item cls="ml-[7px]" gap="gap-[4px]" icon={<DelIcon />} label="删除" />
            <Item cls="ml-[7px]" gap="gap-[4px]" icon={<CopyIcon />} label="复制" />
            <Item cls="ml-[8px]" gap="gap-[3px]" icon={<RenameIcon />} label="重命名" />
            <Sep cls="ml-[6px]" />
            <span className="ml-[3px]">楼层</span>
            <div className="ml-[6px] w-[63px] h-[24px] bg-white flex items-center pl-[2px] shrink-0"><span>第5层</span><Caret cls="ml-[22px]" /></div>
            <Sep cls="ml-[3px]" />
            <Item cls="ml-[4px]" gap="gap-[3px]" icon={<SortIcon />} label="排序" />
            <Caret cls="ml-[3px]" />
            <Item cls="ml-[6px]" gap="gap-[4px]" icon={<FilterIcon />} label="过滤" />
            <Caret cls="ml-[3px]" />
            <Sep cls="ml-[6px]" />
            <Item cls="ml-[5px]" gap="gap-[4px]" icon={<CopyFloor />} label="从其他楼层复制构件" />
            <Item cls="ml-[6px]" gap="gap-[4px]" icon={<CopyFloor flip />} label="复制构件到其他楼层" />
            <Sep cls="ml-[6px]" />
            <span className="ml-[7px]">查找</span>
            <Caret cls="ml-[3px]" />
            <Sep cls="ml-[6px]" />
            <ArrowUp size={14} strokeWidth={3} color="#1e78d6" className="ml-[8px] shrink-0" />
            <span className="ml-[5px]">上移</span>
            <ArrowDown size={14} strokeWidth={3} color="#b0b0b0" className="ml-[9px] shrink-0" />
            <span className="ml-[6px] text-[#8e8e8e]">下移</span>
          </div>
          <div className="flex-1 min-h-0 flex mt-[3px] mb-[2px]">
            <CompTree />
            <PropPanel />
          </div>
        </div>
      </div>
      {/* status */}
      <div className="h-[20px] shrink-0 flex gap-[2px] bg-white text-[#222]">
        <div className="w-[148px] border border-[#ddd] bg-[#f4f4f4]" />
        <div className="w-[78px] border border-[#ddd] bg-[#f4f4f4] flex items-center pl-[1px] leading-none"><Mix text="层高:2.8m" /></div>
        <div className="w-[98px] border border-[#ddd] bg-[#f4f4f4] flex items-center pl-[1px] leading-none"><Mix text="底标高:14.77m" /></div>
        <div className="w-[48px] border border-[#ddd] bg-[#f4f4f4] flex items-center pl-[1px] leading-none"><Mix text="0" /></div>
        <div className="w-[913px] border border-[#ddd] bg-[#f4f4f4]" />
        <div className="flex-1 border border-[#ddd] bg-[#f4f4f4] flex items-center pl-[1px] leading-none"><Mix text="45.5 FPS" /></div>
      </div>
      <div className="h-px shrink-0" />
      <Taskbar />

      {/* floating: dialog, IME bar, badge */}
      <Dialog />
      <div className="absolute left-[805px] top-[12px] flex items-center">
        <div className="w-[27px] h-[25px] rounded-[5px] bg-[#f1501e] flex items-center justify-center text-white text-[22px] font-bold leading-none -rotate-12 z-10">S</div>
        <div className="-ml-[1px] w-[157px] h-[23px] bg-[#f7fafd] border border-[#b9d2e8] flex items-center text-[#1e78d6]">
          <span className="ml-[6px] text-[15px] font-bold leading-none">中</span>
          <span className="ml-[5px] text-[14px] font-bold leading-none">°,</span>
          <Mic size={16} strokeWidth={2.5} className="ml-[7px]" />
          <Keyboard size={17} strokeWidth={2.2} className="ml-[5px]" />
          <svg width="16" height="16" viewBox="0 0 16 16" className="ml-[6px]"><circle cx="6" cy="4" r="3" fill="#a9b4bf" /><path d="M1 14c0-6 10-6 10 0z" fill="#a9b4bf" /><rect x="8" y="9" width="8" height="6" fill="#d5dbe1" /></svg>
          <Shirt size={16} fill="#1e78d6" className="ml-[4px]" />
          <Wrench size={16} fill="#1e78d6" className="ml-[5px]" />
        </div>
      </div>
      <div className="absolute left-[1139px] -top-[27px] w-[47px] h-[47px] rounded-full bg-[#2fb84c] border-2 border-[#bcbcbc] flex items-end justify-center pb-[4px] text-white text-[12px] font-bold leading-none">74</div>
    </div>
  );
}
